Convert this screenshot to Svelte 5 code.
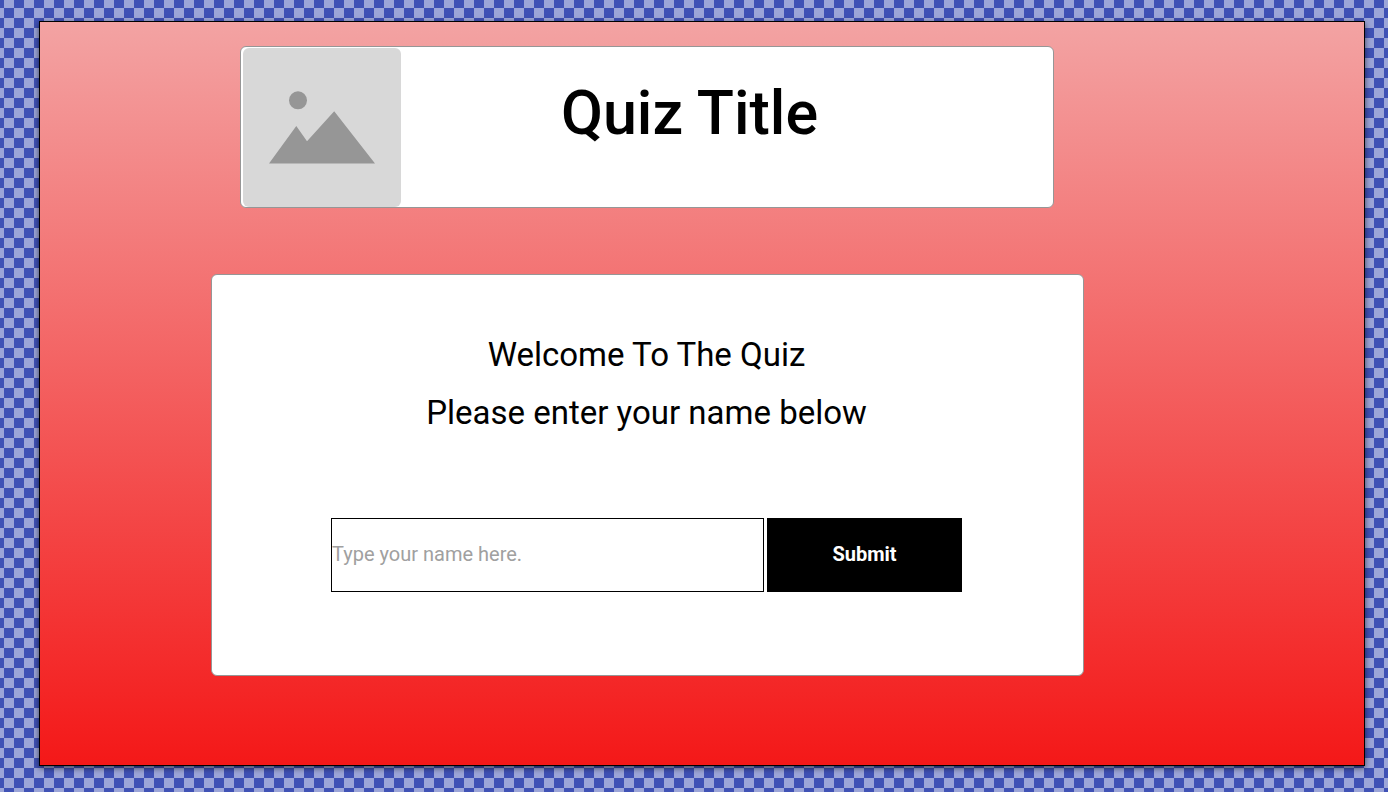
<script>
  let name = $state('');

  function submit(event) {
    event.preventDefault();
  }
</script>

<main class="stage">
  <header class="card title-card">
    <svg class="picture" viewBox="0 0 158 159" role="img" aria-label="Quiz picture">
      <rect width="158" height="159" rx="6" fill="#d8d8d8" />
      <circle cx="55" cy="52.3" r="9" fill="#969696" />
      <path d="M26 115.5 53.3 78 64 93.2 91.2 63.3 132 115.5Z" fill="#969696" />
    </svg>
    <h1>Quiz Title</h1>
  </header>

  <section class="card welcome">
    <p>Welcome To The Quiz</p>
    <p>Please enter your name below</p>
    <form onsubmit={submit}>
      <input type="text" aria-label="Your name" placeholder="Type your name here." bind:value={name} />
      <button type="submit">Submit</button>
    </form>
  </section>
</main>

<style>
  :global(body) {
    margin: 0;
    background: conic-gradient(#9ca5d8 25%, #3f51b5 0 50%, #9ca5d8 0 75%, #3f51b5 0) 14px 18px / 20px 20px;
  }

  :global(#app) {
    display: flow-root;
  }

  .stage {
    box-sizing: border-box;
    min-height: calc(100vh - 47px);
    margin: 21px 23px 26px 39px;
    padding: 24px 280px 89px 171px;
    border: 1px solid #000;
    background: linear-gradient(#f3a3a3, #f41818);
    box-shadow: 0 2px 6px rgba(0, 0, 0, 0.6);
    font-family: Roboto, sans-serif;
    color: #000;
  }

  .card {
    box-sizing: border-box;
    border: 1px solid #969696;
    border-radius: 6px;
    background: #fff;
  }

  .title-card {
    display: flex;
    align-items: flex-start;
    margin: 0 30px 66px 29px;
    padding: 1px 75px 0 2px;
  }

  .picture {
    flex: none;
    width: 158px;
    height: 159px;
  }

  h1 {
    flex: 1;
    margin: 29px 0 0;
    font-size: 61px;
    font-weight: 500;
    line-height: 72px;
    text-align: center;
  }

  .welcome {
    padding: 51px 121px 83px 119px;
  }

  p {
    margin: 0;
    font-size: 33px;
    font-weight: 400;
    line-height: 58px;
    text-align: center;
  }

  form {
    display: flex;
    gap: 3px;
    margin-top: 76px;
  }

  input,
  button {
    box-sizing: border-box;
    height: 74px;
    margin: 0;
    border: 1px solid #000;
    border-radius: 0;
    font-family: inherit;
    font-size: 20px;
  }

  input {
    flex: 1;
    min-width: 0;
    padding: 0 0 2px;
    background: #fff;
    color: #000;
  }

  input::placeholder {
    color: #a0a0a0;
    opacity: 1;
  }

  button {
    width: 195px;
    padding: 0 0 2px;
    background: #000;
    color: #fff;
    font-weight: 700;
  }
</style>
